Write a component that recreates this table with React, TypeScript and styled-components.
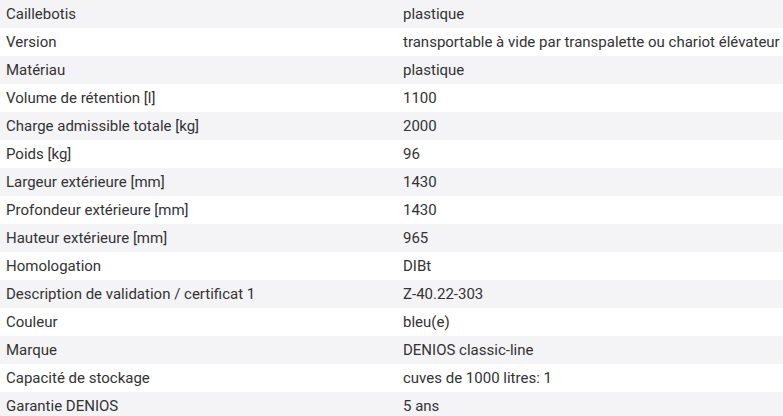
import React from 'react';
import styled, { createGlobalStyle } from 'styled-components';

const GlobalStyle = createGlobalStyle`
  html, body {
    margin: 0;
    padding: 0;
    background: #ffffff;
  }
  body {
    font-family: Roboto, "Liberation Sans", Arial, sans-serif;
  }
`;

interface Spec {
  label: string;
  value: string;
}

const specs: Spec[] = [
  { label: 'Caillebotis', value: 'plastique' },
  { label: 'Version', value: 'transportable à vide par transpalette ou chariot élévateur' },
  { label: 'Matériau', value: 'plastique' },
  { label: 'Volume de rétention [l]', value: '1100' },
  { label: 'Charge admissible totale [kg]', value: '2000' },
  { label: 'Poids [kg]', value: '96' },
  { label: 'Largeur extérieure [mm]', value: '1430' },
  { label: 'Profondeur extérieure [mm]', value: '1430' },
  { label: 'Hauteur extérieure [mm]', value: '965' },
  { label: 'Homologation', value: 'DIBt' },
  { label: 'Description de validation / certificat 1', value: 'Z-40.22-303' },
  { label: 'Couleur', value: 'bleu(e)' },
  { label: 'Marque', value: 'DENIOS classic-line' },
  { label: 'Capacité de stockage', value: 'cuves de 1000 litres: 1' },
  { label: 'Garantie DENIOS', value: '5 ans' },
];

const Table = styled.div`
  width: 783px;
  display: flex;
  flex-direction: column;
`;

const Row = styled.div<{ $striped: boolean }>`
  display: grid;
  grid-template-columns: 397px 1fr;
  height: 28px;
  align-items: center;
  background-color: ${(p) => (p.$striped ? '#f4f4f6' : '#ffffff')};
`;

const Cell = styled.div`
  padding-left: 6px;
  font-size: 15px;
  color: #333333;
  white-space: nowrap;
`;

const App: React.FC = () => {
  return (
    <>
      <GlobalStyle />
      <Table>
        {specs.map((spec, i) => (
          <Row key={spec.label} $striped={i % 2 === 0}>
            <Cell>{spec.label}</Cell>
            <Cell>{spec.value}</Cell>
          </Row>
        ))}
      </Table>
    </>
  );
};

export default App;
